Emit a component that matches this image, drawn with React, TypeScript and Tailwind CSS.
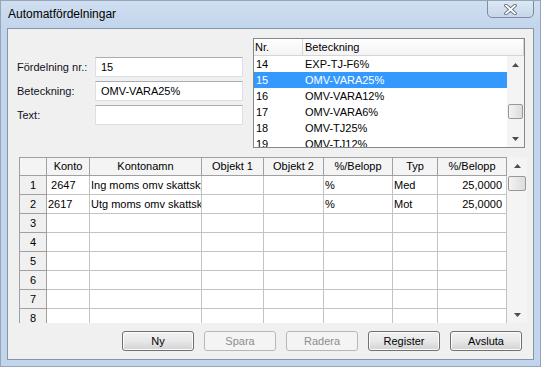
import React from "react";

const gridCols = "grid grid-cols-[27px_43px_112px_62px_60px_69px_45px_69px]";

const listRows = [
  { nr: "14", name: "EXP-TJ-F6%" },
  { nr: "15", name: "OMV-VARA25%", selected: true },
  { nr: "16", name: "OMV-VARA12%" },
  { nr: "17", name: "OMV-VARA6%" },
  { nr: "18", name: "OMV-TJ25%" },
  { nr: "19", name: "OMV-TJ12%" },
];

const gridHeaders = ["", "Konto", "Kontonamn", "Objekt 1", "Objekt 2", "%/Belopp", "Typ", "%/Belopp"];

const gridRows = [
  [" 2647", "Ing moms omv skattskyldighet", "", "", "%", "Med", "25,0000"],
  ["2617", "Utg moms omv skattskyldighet", "", "", "%", "Mot", "25,0000"],
  ["", "", "", "", "", "", ""],
  ["", "", "", "", "", "", ""],
  ["", "", "", "", "", "", ""],
  ["", "", "", "", "", "", ""],
  ["", "", "", "", "", "", ""],
  ["", "", "", "", "", "", ""],
];

function Arrow({ down }: { down?: boolean }) {
  return (
    <svg width="7" height="4" viewBox="0 0 7 4">
      <path d={down ? "M0 0 L7 0 L3.5 4 Z" : "M3.5 0 L7 4 L0 4 Z"} fill="#4d4d4d" />
    </svg>
  );
}

function ScrollBar({ thumbTop, thumbH, width }: { thumbTop: number; thumbH: number; width: string }) {
  return (
    <div className={`${width} h-full bg-[#f4f4f4] flex flex-col items-center shrink-0`}>
      <div className="h-[17px] flex items-center justify-center w-full">
        <Arrow />
      </div>
      <div className="flex-1 w-full relative">
        <div
          className="absolute left-[1px] right-[1px] rounded-[2px] border border-[#979797] bg-gradient-to-r from-[#f3f3f3] to-[#dcdcdc]"
          style={{ top: thumbTop, height: thumbH }}
        />
      </div>
      <div className="h-[17px] flex items-center justify-center w-full">
        <Arrow down />
      </div>
    </div>
  );
}

function Btn({ label, disabled }: { label: string; disabled?: boolean }) {
  return (
    <div
      className={
        disabled
          ? "w-[72px] h-[20px] rounded-[3px] border border-[#b5b8bb] bg-[#f4f4f4] text-[#8d8d8d] flex items-center justify-center"
          : "w-[72px] h-[20px] rounded-[3px] border border-[#707070] bg-gradient-to-b from-[#f2f2f2] via-[#e8e8e8] to-[#d2d2d2] text-black flex items-center justify-center shadow-[inset_0_0_0_1px_#fbfbfb]"
      }
    >
      {label}
    </div>
  );
}

function Field({ label, value }: { label: string; value: string }) {
  return (
    <div className="flex items-center h-[20px]">
      <div className="w-[78px] text-[#101020]">{label}</div>
      <div className="w-[148px] h-[20px] bg-white border border-[#dbdfe6] border-t-[#abadb3] pl-[5px] flex items-center">
        {value}
      </div>
    </div>
  );
}

export default function App() {
  return (
    <div className="w-[541px] h-[367px] bg-[#c3d5ec] border border-[#96a5b8] flex flex-col font-['Liberation_Sans',Arial,sans-serif] text-[11px] text-black overflow-hidden">
      {/* Title bar */}
      <div className="h-[27px] flex justify-between bg-gradient-to-b from-[#cfdff1] to-[#c3d5ec] shrink-0">
        <div className="pl-[7px] pt-[6px] text-[12px] leading-[15px] text-black">Automatfördelningar</div>
        <div className="mr-[6px] w-[47px] h-[18px] -mt-[1px] rounded-b-[5px] border border-[#7d8ca0] bg-gradient-to-b from-[#dde8f4] to-[#c6d6ea] flex items-center justify-center">
          <svg width="13" height="11" viewBox="0 0 13 11">
            <path d="M2 1.5 L11 9.5 M11 1.5 L2 9.5" stroke="#5b6675" strokeWidth="3.6" strokeLinecap="round" />
            <path d="M2 1.5 L11 9.5 M11 1.5 L2 9.5" stroke="#ffffff" strokeWidth="1.8" strokeLinecap="round" />
          </svg>
        </div>
      </div>

      {/* Client area */}
      <div className="mx-[6px] border border-[#8596ab] bg-[#f0f0f0] h-[332px] flex flex-col shrink-0">
        <div className="flex pt-[9px]">
          <div className="w-[245px] shrink-0 pl-[9px] pt-[19px] flex flex-col gap-[4px]">
            <Field label="Fördelning nr.:" value="15" />
            <Field label="Beteckning:" value="OMV-VARA25%" />
            <Field label="Text:" value="" />
          </div>

          {/* List view */}
          <div className="w-[272px] h-[110px] border border-[#828790] bg-white flex flex-col">
            <div className="h-[17px] flex border-b border-[#d5d5d5] bg-gradient-to-b from-[#ffffff] to-[#f3f3f3] shrink-0">
              <div className="w-[49px] pl-[1px] border-r border-[#d5d5d5] flex items-center">Nr.</div>
              <div className="flex-1 pl-[2px] border-r border-[#d5d5d5] flex items-center">Beteckning</div>
            </div>
            <div className="flex flex-1 min-h-0">
              <div className="flex-1 flex flex-col overflow-hidden">
                {listRows.map((r) => (
                  <div
                    key={r.nr}
                    className={
                      r.selected
                        ? "h-[16px] flex items-center bg-[#3399ff] text-white shrink-0"
                        : "h-[16px] flex items-center shrink-0"
                    }
                  >
                    <div className="w-[49px] pl-[2px]">{r.nr}</div>
                    <div className="pl-[2px]">{r.name}</div>
                  </div>
                ))}
              </div>
              <ScrollBar width="w-[17px]" thumbTop={31} thumbH={15} />
            </div>
          </div>
        </div>

        {/* Grid */}
        <div className="mt-[9px] ml-[11px] w-[508px] h-[166px] flex overflow-hidden shrink-0">
          <div className="w-[488px] border-l border-t border-[#a0a0a0] bg-white overflow-hidden">
            <div className={`${gridCols} h-[18px]`}>
              {gridHeaders.map((h, i) => (
                <div
                  key={i}
                  className="border-r border-b border-[#a0a0a0] bg-[#f4f4f4] flex items-center justify-center whitespace-nowrap overflow-hidden"
                >
                  {h}
                </div>
              ))}
            </div>
            {gridRows.map((row, ri) => (
              <div key={ri} className={`${gridCols} h-[19px]`}>
                <div className="border-r border-b border-[#a0a0a0] bg-[#f0f0f0] flex items-center justify-center">
                  {ri + 1}
                </div>
                {row.map((c, ci) => (
                  <div
                    key={ci}
                    className={
                      ci === 6
                        ? "border-r border-b border-[#c3c3c3] flex items-center justify-end pr-[4px] whitespace-nowrap overflow-hidden"
                        : "border-r border-b border-[#c3c3c3] flex items-center pl-[1px] whitespace-pre overflow-hidden"
                    }
                  >
                    {c}
                  </div>
                ))}
              </div>
            ))}
          </div>
          <ScrollBar width="w-[20px]" thumbTop={2} thumbH={15} />
        </div>

        {/* Buttons */}
        <div className="mt-[8px] flex justify-end gap-[10px] pr-[11px]">
          <Btn label="Ny" />
          <Btn label="Spara" disabled />
          <Btn label="Radera" disabled />
          <Btn label="Register" />
          <Btn label="Avsluta" />
        </div>
      </div>
    </div>
  );
}
